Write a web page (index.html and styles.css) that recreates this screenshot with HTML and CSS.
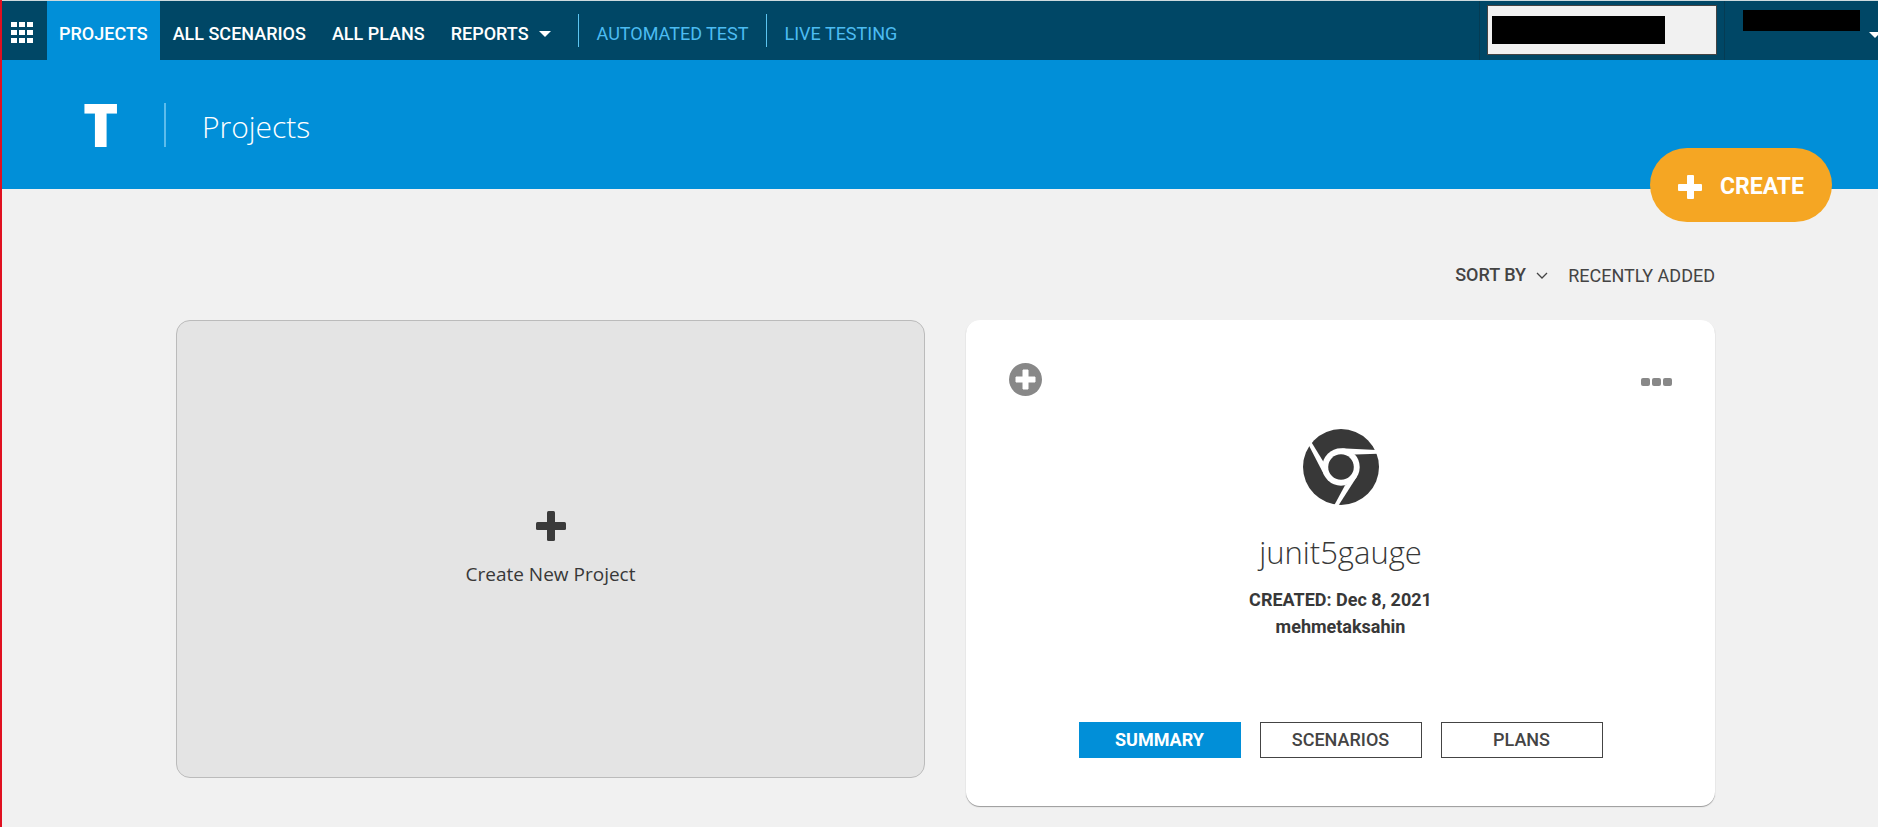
FILE: index.html
```html
<!DOCTYPE html>
<html lang="en">
<head>
<meta charset="utf-8">
<title>Projects</title>
<link rel="stylesheet" href="styles.css">
</head>
<body>
<nav class="topbar">
  <button class="apps" aria-label="Applications">
    <svg width="22" height="21" viewBox="0 0 22 21" fill="#fff"><path d="M0 0h6v5H0zM8 0h6v5H8zM16 0h6v5h-6zM0 8h6v5H0zM8 8h6v5H8zM16 8h6v5h-6zM0 16h6v5H0zM8 16h6v5H8zM16 16h6v5h-6z"/></svg>
  </button>
  <a class="tab active" href="#">PROJECTS</a>
  <a class="tab" href="#">ALL SCENARIOS</a>
  <a class="tab" href="#">ALL PLANS</a>
  <a class="tab reports" href="#">REPORTS <span class="caret"></span></a>
  <a class="product" href="#">AUTOMATED TEST</a>
  <a class="product" href="#">LIVE TESTING</a>
  <div class="search"><div class="search-box"><span class="redacted"></span></div></div>
  <button class="account" aria-label="Account"><span class="redacted"></span><span class="caret"></span></button>
</nav>
<header class="hero">
  <div class="logo">T</div>
  <h1>Projects</h1>
  <button class="create">
    <svg width="24" height="24" viewBox="0 0 24 24" fill="#fff"><rect x="9" width="7" height="24" rx="1"/><rect y="9" width="24" height="7" rx="1"/></svg>
    CREATE
  </button>
</header>
<main>
  <div class="sort">
    <button class="sort-by">SORT BY
      <svg width="12" height="7" viewBox="0 0 12 7" fill="none" stroke="#444" stroke-width="1.3"><path d="M1 1l5 5 5-5"/></svg>
    </button>
    <span class="sort-value">RECENTLY ADDED</span>
  </div>
  <section class="cards">
    <button class="new-card">
      <svg width="30" height="30" viewBox="0 0 30 30" fill="#3a3a3a"><rect x="11" width="8" height="30" rx="1.5"/><rect y="11" width="30" height="8" rx="1.5"/></svg>
      <span>Create New Project</span>
    </button>
    <article class="card">
      <div class="card-top">
        <button class="icon" aria-label="Add">
          <svg width="33" height="33" viewBox="0 0 33 33"><circle cx="16.500" cy="16.500" r="16.500" fill="#888"/><path d="M14 7h5v7h7v5h-7v7h-5v-7H7v-5h7z" fill="#fff" stroke="#fff" stroke-linejoin="round"/></svg>
        </button>
        <button class="icon more" aria-label="More">
          <svg width="31" height="8" viewBox="0 0 31 8" fill="#888"><rect width="9" height="8" rx="2"/><rect x="11" width="9" height="8" rx="2"/><rect x="22" width="9" height="8" rx="2"/></svg>
        </button>
      </div>
      <svg class="browser" width="76" height="76" viewBox="-38 -38 76 76">
        <defs><path id="arm" d="M0-18.700L35.500-17 37-13.300 14-12.600z"/></defs>
        <circle r="38" fill="#383838"/>
        <g fill="#fff"><circle r="18.700"/><use href="#arm"/><use href="#arm" transform="rotate(120)"/><use href="#arm" transform="rotate(240)"/></g>
        <circle r="12.800" fill="#383838"/>
      </svg>
      <h2>junit5gauge</h2>
      <p class="meta">CREATED: Dec 8, 2021<br>mehmetaksahin</p>
      <div class="actions">
        <a class="primary" href="#">SUMMARY</a>
        <a href="#">SCENARIOS</a>
        <a href="#">PLANS</a>
      </div>
    </article>
  </section>
</main>
</body>
</html>
```
FILE: styles.css
```css
* { box-sizing: border-box; }
body {
  margin: 0;
  min-height: 100vh;
  border-left: 2px solid #e01020;
  background: #f1f1f1;
  color: #383838;
  font: 500 18px/20px Roboto, sans-serif;
  overflow-x: hidden;
}
button { padding: 0; border: 0; background: none; color: inherit; font: inherit; }
a { color: inherit; text-decoration: none; }
svg { display: block; }

.topbar {
  display: flex;
  align-items: stretch;
  height: 60px;
  border-top: 1px solid #cddade;
  background: #004766;
  color: #fff;
}
.apps { width: 45px; padding: 4px 3px 0 9px; }
.tab { display: flex; align-items: center; padding: 6px 13px 0; }
.active { padding: 6px 12px 0; background: #018fd8; }
.caret { border: 6px solid transparent; border-top-color: #fff; border-bottom: 0; }
.reports { gap: 10px; padding: 6px 27px 0 13px; }
.product {
  display: flex;
  align-items: center;
  height: 33px;
  margin-top: 13px;
  padding: 6px 17px 0 18px;
  border-left: 1px solid #5cc4f0;
  color: #4cbcf2;
  font-weight: 400;
}
.search {
  margin-left: auto;
  padding: 4px 7px 5px;
  border: solid #053c54;
  border-width: 0 1px;
}
.search-box {
  display: flex;
  align-items: center;
  width: 230px;
  height: 50px;
  padding-left: 4px;
  border: 1px solid #444;
  background: #f1f1f1;
}
.redacted { background: #000; }
.search .redacted { width: 173px; height: 28px; }
.account { display: flex; gap: 9px; margin-right: -3px; padding: 9px 0 0 18px; }
.account .redacted { width: 117px; height: 21px; }
.account .caret { margin-top: 22px; }

.hero {
  position: relative;
  display: flex;
  align-items: center;
  height: 129px;
  padding-left: 81px;
  background: #018fd8;
  color: #fff;
}
.logo {
  width: 81px;
  padding-bottom: 2px;
  font: 800 60px/42px "Open Sans", sans-serif;
}
h1 {
  margin: 0;
  padding: 3px 0 0 36px;
  border-left: 2px solid #5cbcec;
  font: 300 30px/41px "Open Sans", sans-serif;
}
.create {
  position: absolute;
  right: 46px;
  bottom: -33px;
  display: flex;
  align-items: center;
  gap: 18px;
  height: 74px;
  padding: 3px 28px 0;
  border-radius: 37px;
  background: #f5a623;
  font-size: 23px;
  font-weight: 700;
}

main { padding: 76px 163px 0 174px; }
.sort {
  display: flex;
  justify-content: flex-end;
  gap: 20px;
  height: 55px;
  color: #444;
}
.sort-by { display: flex; align-items: center; gap: 10px; height: 20px; }
.sort-value { padding-top: 1px; font-weight: 400; }
.cards {
  display: grid;
  grid-template-columns: 1fr 1fr;
  align-items: start;
  gap: 41px;
}
.new-card {
  display: flex;
  flex-direction: column;
  align-items: center;
  justify-content: center;
  gap: 20px;
  height: 458px;
  border: 1px solid #bbb;
  border-radius: 14px;
  background: #e4e4e4;
  font: 400 19px/26px "Open Sans", sans-serif;
}
.card {
  display: flex;
  flex-direction: column;
  align-items: center;
  padding: 43px 43px 48px;
  border-radius: 14px;
  background: #fff;
  box-shadow: 0 1px 1px #999;
}
.card-top {
  display: flex;
  align-items: center;
  justify-content: space-between;
  align-self: stretch;
}
.more { padding-top: 4px; }
.browser { margin-top: 33px; }
h2 {
  margin: 27px 0 0;
  font: 300 31px/40px "Open Sans", sans-serif;
}
.meta { margin: 14px 0 0; font-weight: 700; line-height: 27px; text-align: center; }
.actions { display: flex; gap: 19px; margin-top: 82px; }
.actions a {
  width: 162px;
  border: 1px solid #444;
  color: #444;
  line-height: 34px;
  text-align: center;
}
.actions .primary { border-color: #018fd8; background: #018fd8; color: #fff; font-weight: 700; }
```
